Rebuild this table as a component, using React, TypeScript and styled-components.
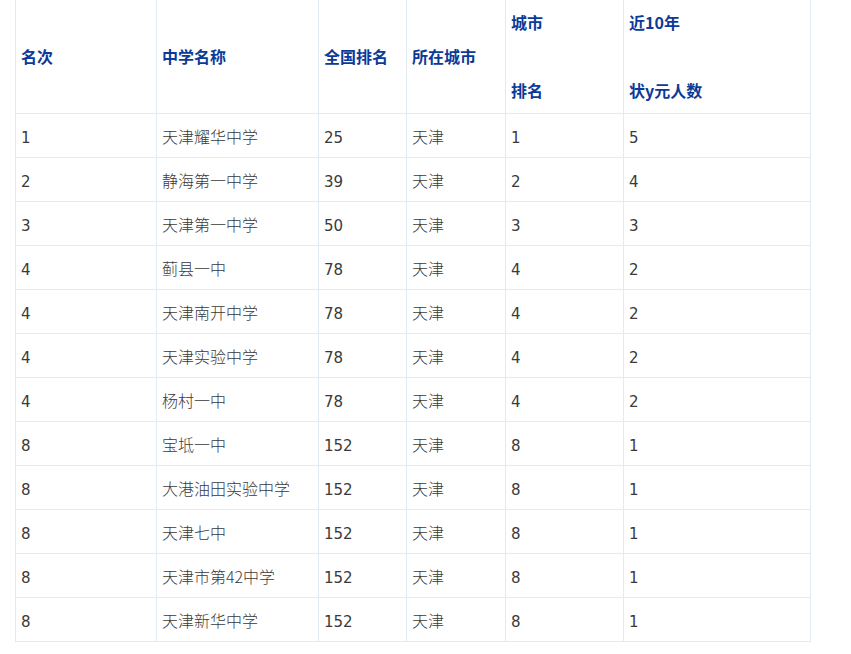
import React from "react";
import styled, { createGlobalStyle } from "styled-components";

const Global = createGlobalStyle`
  html, body { margin: 0; padding: 0; background: #fff; }
  body { font-family: "Liberation Sans", "Noto Sans CJK SC", sans-serif; }
`;

const Page = styled.div`
  padding: 0 0 0 15px;
`;

const Table = styled.table`
  border-collapse: collapse;
  table-layout: fixed;
  width: 796px;
  margin-top: -1px;
  font-size: 16px;
  color: #333;
`;

const Head = styled.th`
  border: 1px solid #e1ebf3;
  text-align: left;
  vertical-align: middle;
  padding: 5px 5px 6px 5px;
  height: 102px;
  line-height: 34px;
  font-weight: bold;
  color: #0b3a99;
  font-family: "Noto Sans CJK SC", sans-serif;
`;

const Cell = styled.td`
  border: 1px solid #e1ebf3;
  padding: 4px 5px 0 5px;
  height: 39px;
  vertical-align: middle;
  font-family: "DejaVu Sans", "Noto Sans CJK SC", sans-serif;
  font-size: 15px;
  color: #3a3a3a;
`;

const NameCell = styled(Cell)`
  padding: 0 5px;
  height: 43px;
  font-family: "Noto Sans CJK SC", sans-serif;
  font-size: 16px;
  font-weight: 300;
`;

const widths = [141, 162, 88, 99, 118, 187];

const rows: [string, string, string, string, string, string][] = [
  ["1", "天津耀华中学", "25", "天津", "1", "5"],
  ["2", "静海第一中学", "39", "天津", "2", "4"],
  ["3", "天津第一中学", "50", "天津", "3", "3"],
  ["4", "蓟县一中", "78", "天津", "4", "2"],
  ["4", "天津南开中学", "78", "天津", "4", "2"],
  ["4", "天津实验中学", "78", "天津", "4", "2"],
  ["4", "杨村一中", "78", "天津", "4", "2"],
  ["8", "宝坻一中", "152", "天津", "8", "1"],
  ["8", "大港油田实验中学", "152", "天津", "8", "1"],
  ["8", "天津七中", "152", "天津", "8", "1"],
  ["8", "天津市第42中学", "152", "天津", "8", "1"],
  ["8", "天津新华中学", "152", "天津", "8", "1"],
];

export default function App() {
  return (
    <>
      <Global />
      <Page>
        <Table>
          <colgroup>
            {widths.map((w, i) => (
              <col key={i} style={{ width: w }} />
            ))}
          </colgroup>
          <thead>
            <tr>
              <Head>名次</Head>
              <Head>中学名称</Head>
              <Head>全国排名</Head>
              <Head>所在城市</Head>
              <Head>
                城市
                <br />
                <br />
                排名
              </Head>
              <Head>
                近10年
                <br />
                <br />
                状y元人数
              </Head>
            </tr>
          </thead>
          <tbody>
            {rows.map((r, i) => (
              <tr key={i}>
                <Cell>{r[0]}</Cell>
                <NameCell>{r[1]}</NameCell>
                <Cell>{r[2]}</Cell>
                <NameCell>{r[3]}</NameCell>
                <Cell>{r[4]}</Cell>
                <Cell>{r[5]}</Cell>
              </tr>
            ))}
          </tbody>
        </Table>
      </Page>
    </>
  );
}
